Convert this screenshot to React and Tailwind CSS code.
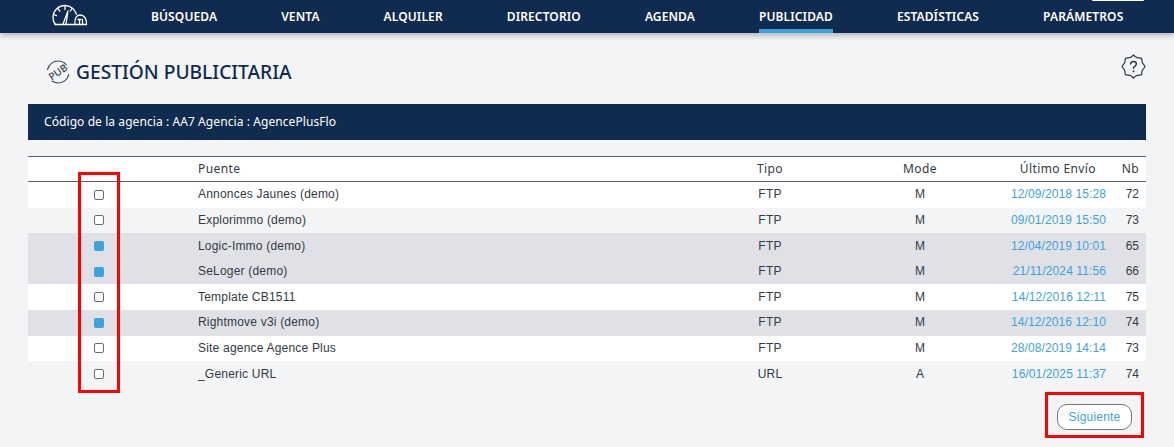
import React from "react";

const navItems = ["BÚSQUEDA", "VENTA", "ALQUILER", "DIRECTORIO", "AGENDA", "PUBLICIDAD", "ESTADÍSTICAS", "PARÁMETROS"];

const rows = [
  { name: "Annonces Jaunes (demo)", type: "FTP", mode: "M", date: "12/09/2018 15:28", nb: 72, bg: "bg-white" },
  { name: "Explorimmo (demo)", type: "FTP", mode: "M", date: "09/01/2019 15:50", nb: 73, bg: "bg-[#f3f4f6]" },
  { name: "Logic-Immo (demo)", type: "FTP", mode: "M", date: "12/04/2019 10:01", nb: 65, bg: "bg-[#e0e1e6]", checked: true },
  { name: "SeLoger (demo)", type: "FTP", mode: "M", date: "21/11/2024 11:56", nb: 66, bg: "bg-[#e0e1e6]", checked: true },
  { name: "Template CB1511", type: "FTP", mode: "M", date: "14/12/2016 12:11", nb: 75, bg: "bg-white" },
  { name: "Rightmove v3i (demo)", type: "FTP", mode: "M", date: "14/12/2016 12:10", nb: 74, bg: "bg-[#e0e1e6]", checked: true },
  { name: "Site agence Agence Plus", type: "FTP", mode: "M", date: "28/08/2019 14:14", nb: 73, bg: "bg-white" },
  { name: "_Generic URL", type: "URL", mode: "A", date: "16/01/2025 11:37", nb: 74, bg: "bg-[#f3f4f6]" },
];

const cols = "grid grid-cols-[142px_550px_100px_50px_100px_136px_42px] items-center";

const LogoIcon = () => (
  <svg width="36" height="22" viewBox="0 0 36 22" fill="none" stroke="white" strokeWidth="1.3" strokeLinecap="round" strokeLinejoin="round">
    <path d="M3.5 20.5C1.8 18.8 1 16.5 1 13.5C1 7 6.3 1.5 13 1.5C18.5 1.5 23 5.2 24.4 10.2" />
    <path d="M3 20.5H34.5" />
    <path d="M11 20L16 7L14 20" />
    <path d="M13 2V5.5M6 4.8L7.8 7.2M1.8 10.5L4.6 11.6M20 4.5L18.3 7" />
    <path d="M23 20.5C22.3 14.5 24.5 11 28 11C32 11 35 14.5 34.5 20.5" />
    <path d="M27.5 20V15.5M30.5 15.5V20M26 15.5H29" />
  </svg>
);

const PubIcon = () => (
  <svg width="24" height="24" viewBox="0 0 24 24" fill="none" className="shrink-0">
    <path d="M1.5 9.5C2.8 4.5 7 1 12 1C15.2 1 18 2.2 20.2 4.6" stroke="#3f4652" strokeWidth="1.1" strokeLinecap="round" />
    <path d="M22.8 14.5C21.5 19.5 17.3 23 12.3 23C10 23 8 22.4 6.2 21" stroke="#3f4652" strokeWidth="1.1" strokeLinecap="round" />
    <text x="12" y="15.6" textAnchor="middle" fontSize="10" fontWeight="500" fontFamily="'Noto Sans', sans-serif" fill="#333a45" transform="rotate(-35 12 12)">
      PUB
    </text>
  </svg>
);

// 8-pointed scalloped badge with a question mark
const HelpIcon = () => (
  <svg width="25" height="25" viewBox="0 0 25 25" fill="none" stroke="#333a45" strokeWidth="1.2" strokeLinecap="round" strokeLinejoin="round" className="shrink-0">
    <path d="M12.5 1Q14.5 3.2 16.17 3.63Q18.4 3.6 20.63 4.37Q20.9 6.9 21.37 8.83Q22.8 10.5 24 12.5Q22.8 14.5 21.37 16.17Q20.9 18.1 20.63 20.63Q18.4 21.4 16.17 21.37Q14.5 21.8 12.5 24Q10.5 21.8 8.83 21.37Q6.6 21.4 4.37 20.63Q4.1 18.1 3.63 16.17Q2.2 14.5 1 12.5Q2.2 10.5 3.63 8.83Q4.1 6.9 4.37 4.37Q6.6 3.6 8.83 3.63Q10.5 3.2 12.5 1Z" />
    <path d="M9.6 9.9C9.8 8.3 11 7.5 12.5 7.5C14.2 7.5 15.4 8.6 15.4 10C15.4 11.9 12.5 12.2 12.5 14.2" strokeWidth="1.5" />
    <path d="M12.5 17.2V17.4" strokeWidth="1.8" />
  </svg>
);

const Checkbox = ({ checked }) => (
  <div className="flex justify-center">
    <div
      className={
        checked
          ? "w-[10px] h-[10px] rounded-[2px] bg-[#3fa2dc]"
          : "w-[10px] h-[10px] rounded-[2px] bg-white border border-[#6b6b6b]"
      }
    />
  </div>
);

export default function App() {
  return (
    <div className="relative w-[1174px] h-[447px] overflow-hidden bg-[#f3f4f6] font-['Liberation_Sans',sans-serif]">
      {/* Nav */}
      <nav className="relative z-10 flex items-stretch h-[33px] bg-[#0f2b50] shadow-[0_2px_6px_rgba(0,0,0,0.3)]">
        <div className="w-[151px] pl-[52px] pt-[4px] shrink-0">
          <LogoIcon />
        </div>
        <div className="flex gap-[64px]">
          {navItems.map((item) => (
            <div
              key={item}
              className={
                item === "PUBLICIDAD"
                  ? "pt-[8px] border-b-[4px] border-[#3fa2dc] text-white text-[12px] leading-[17px] tracking-[0.12px] font-semibold font-['Noto_Sans',sans-serif]"
                  : "pt-[8px] text-white text-[12px] leading-[17px] tracking-[0.12px] font-semibold font-['Noto_Sans',sans-serif]"
              }
            >
              {item}
            </div>
          ))}
        </div>
        <div className="absolute top-0 left-[1092px] w-[52px] h-[1px] bg-white rounded-b" />
      </nav>

      <main className="px-[28px]">
        {/* Title */}
        <div className="flex items-center justify-between h-[71px] pt-[7px]">
          <div className="flex items-center gap-[6px] pl-[18px]">
            <PubIcon />
            <h1 className="text-[19.2px] text-[#0f2b50] font-medium font-['Noto_Sans',sans-serif]">GESTIÓN PUBLICITARIA</h1>
          </div>
          <div className="mb-[12px]">
            <HelpIcon />
          </div>
        </div>

        {/* Agency banner */}
        <div className="h-[36px] flex items-center pl-[16px] bg-[#0f2b50] text-white text-[12px] tracking-[0.08px] font-['Noto_Sans',sans-serif]">
          Código de la agencia : AA7 Agencia : AgencePlusFlo
        </div>

        {/* Table */}
        <div className="mt-[16px] text-[12px] text-[#333a45] tracking-[0.2px]">
          <div className={`${cols} h-[26px] bg-white border-y border-[#5a6170] tracking-[0.4px] font-['Noto_Sans',sans-serif]`}>
            <div />
            <div className="pl-[28px]">Puente</div>
            <div className="text-center">Tipo</div>
            <div />
            <div className="text-center">Mode</div>
            <div className="text-right pr-[10px]">Último Envío</div>
            <div className="text-right pr-[9px]">Nb</div>
          </div>
          {rows.map((row) => (
            <div key={row.name} className={`${cols} h-[25.6px] ${row.bg}`}>
              <Checkbox checked={row.checked} />
              <div className="pl-[28px] mb-[0.9px]">{row.name}</div>
              <div className="text-center mb-[0.9px]">{row.type}</div>
              <div />
              <div className="text-center mb-[0.9px]">{row.mode}</div>
              <div className="text-right mb-[0.9px] text-[#3fa2dc] tracking-[0.1px]">{row.date}</div>
              <div className="text-right mb-[0.9px] pr-[9px] tracking-normal">{row.nb}</div>
            </div>
          ))}
        </div>

        {/* Next button */}
        <div className="flex justify-end mt-[17px] pr-[14px]">
          <button className="w-[75px] h-[26px] rounded-[10px] border border-[#777] bg-white text-[#3fa2dc] text-[12px] tracking-[0.2px]">
            Siguiente
          </button>
        </div>
      </main>

      {/* Red annotation boxes */}
      <div className="absolute left-[78px] top-[172px] w-[42px] h-[221px] border-[3px] border-[#ff0000]" />
      <div className="absolute left-[1045px] top-[392px] w-[99px] h-[46px] border-[3px] border-[#ff0000]" />
    </div>
  );
}
